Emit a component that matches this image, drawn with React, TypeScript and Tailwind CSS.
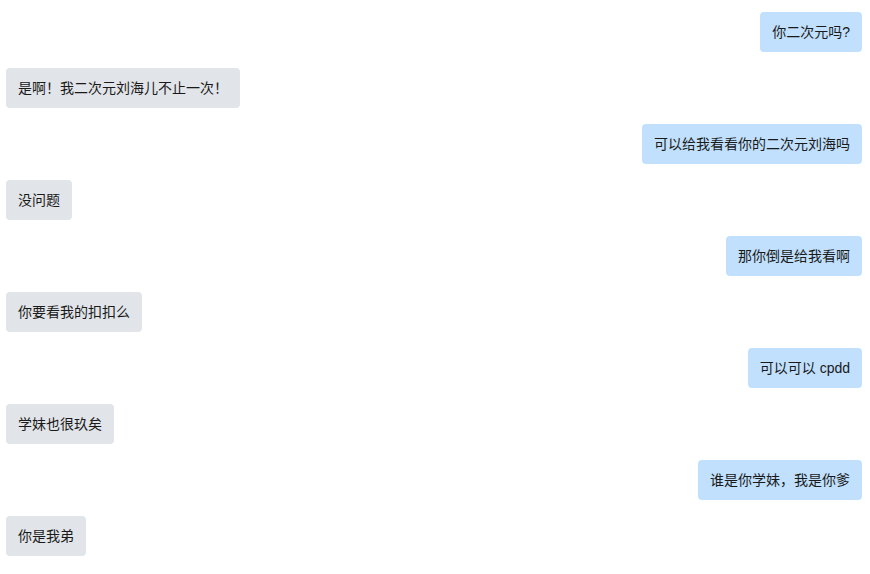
import React from 'react';

type Msg = { me: boolean; text: string };

const messages: Msg[] = [
  { me: true, text: '你二次元吗?' },
  { me: false, text: '是啊！我二次元刘海儿不止一次！' },
  { me: true, text: '可以给我看看你的二次元刘海吗' },
  { me: false, text: '没问题' },
  { me: true, text: '那你倒是给我看啊' },
  { me: false, text: '你要看我的扣扣么' },
  { me: true, text: '可以可以 cpdd' },
  { me: false, text: '学妹也很玖矣' },
  { me: true, text: '谁是你学妹，我是你爹' },
  { me: false, text: '你是我弟' },
];

const App = () => {
  return (
    <div className="w-full min-h-screen bg-white pt-3 pl-[6px] pr-2 font-['Liberation_Sans','Noto_Sans_CJK_SC',sans-serif] text-sm text-[#1a1a1a]">
      <div className="flex flex-col gap-4">
        {messages.map((m, i) => (
          <div key={i} className={m.me ? 'flex justify-end' : 'flex justify-start'}>
            <div
              className={
                m.me
                  ? 'rounded px-3 py-2.5 leading-5 bg-[#c0e0fd]'
                  : 'rounded px-3 py-2.5 leading-5 bg-[#e1e4e8]'
              }
            >
              {m.text}
            </div>
          </div>
        ))}
      </div>
    </div>
  );
};

export default App;
